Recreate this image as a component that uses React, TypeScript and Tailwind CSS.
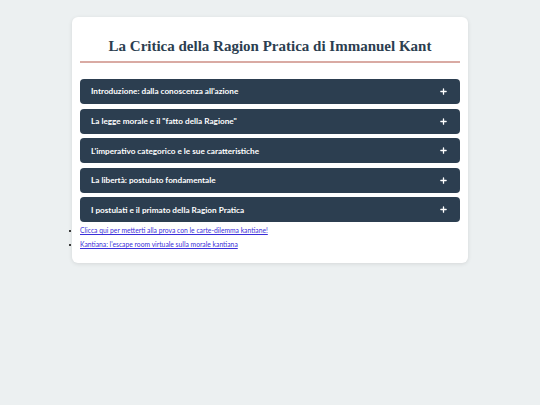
import { Plus } from "lucide-react";

const sections = [
  "Introduzione: dalla conoscenza all'azione",
  'La legge morale e il "fatto della Ragione"',
  "L'imperativo categorico e le sue caratteristiche",
  "La libertà: postulato fondamentale",
  "I postulati e il primato della Ragion Pratica",
];

const links = [
  "Clicca qui per metterti alla prova con le carte-dilemma kantiane!",
  "Kantiana: l'escape room virtuale sulla morale kantiana",
];

export default function App() {
  return (
    <div className="min-h-[405px] bg-[#ecf0f1] pt-[17px] font-['Lato',sans-serif]">
      <div className="mx-auto w-[396px] rounded-md bg-white px-2 pb-[11px] pt-[17px] shadow-[0_1px_4px_rgba(0,0,0,0.1)]">
        <h1 className="text-center font-['Liberation_Serif',serif] text-[15px] font-bold leading-[24px] text-[#2c3e50]">
          La Critica della Ragion Pratica di Immanuel Kant
        </h1>
        <div className="mt-[3px] h-[2px] bg-[#d9aaa3]" />

        <div className="mt-[16px] flex flex-col gap-[4.6px]">
          {sections.map((s) => (
            <button
              key={s}
              className="flex h-[25px] w-full items-center justify-between rounded-[4px] bg-[#2c3e50] pl-[11px] pr-[12px] text-left text-[8.2px] font-bold text-white"
            >
              <span>{s}</span>
              <Plus className="h-[9px] w-[9px]" strokeWidth={3.5} />
            </button>
          ))}
        </div>

        <ul className="list-disc pl-0 text-[6.75px] leading-[8px]">
          {links.map((l) => (
            <li key={l} className="py-[3.3px]">
              <a href="#" className="text-[#3b2fd9] underline">
                {l}
              </a>
            </li>
          ))}
        </ul>
      </div>
    </div>
  );
}
